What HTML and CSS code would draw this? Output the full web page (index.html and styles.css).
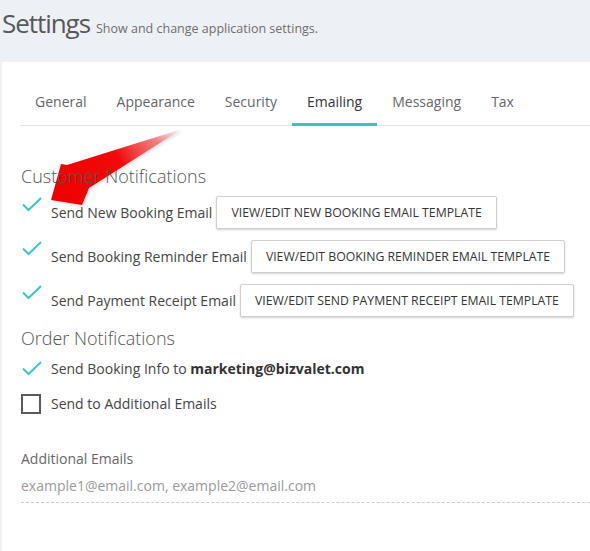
FILE: index.html
```html
<!DOCTYPE html>
<html>
<head>
<meta charset="utf-8">
<link rel="stylesheet" href="styles.css">
</head>
<body>
<header class="page-header">
  <h1 class="title">Settings</h1>
  <span class="subtitle">Show and change application settings.</span>
</header>
<main class="panel">
  <nav class="tabs">
    <a class="tab">General</a>
    <a class="tab">Appearance</a>
    <a class="tab">Security</a>
    <a class="tab active">Emailing</a>
    <a class="tab">Messaging</a>
    <a class="tab">Tax</a>
  </nav>

  <section class="content">
    <h2 class="section-title">Customer Notifications</h2>
    <div class="row row-btn">
      <span class="check"><svg viewBox="0 0 20 15" width="20" height="15"><polyline points="1,7.5 6.5,13 19,1" /></svg></span>
      <span class="label">Send New Booking Email</span>
      <button class="btn">VIEW/EDIT NEW BOOKING EMAIL TEMPLATE</button>
    </div>
    <div class="row row-btn">
      <span class="check"><svg viewBox="0 0 20 15" width="20" height="15"><polyline points="1,7.5 6.5,13 19,1" /></svg></span>
      <span class="label">Send Booking Reminder Email</span>
      <button class="btn">VIEW/EDIT BOOKING REMINDER EMAIL TEMPLATE</button>
    </div>
    <div class="row row-btn row-last">
      <span class="check"><svg viewBox="0 0 20 15" width="20" height="15"><polyline points="1,7.5 6.5,13 19,1" /></svg></span>
      <span class="label">Send Payment Receipt Email</span>
      <button class="btn">VIEW/EDIT SEND PAYMENT RECEIPT EMAIL TEMPLATE</button>
    </div>

    <h2 class="section-title second">Order Notifications</h2>
    <div class="row row-plain">
      <span class="check"><svg viewBox="0 0 20 15" width="20" height="15"><polyline points="1,7.5 6.5,13 19,1" /></svg></span>
      <span class="label">Send Booking Info to <b>marketing@bizvalet.com</b></span>
    </div>
    <div class="row row-box">
      <span class="box"></span>
      <span class="label">Send to Additional Emails</span>
    </div>

    <div class="field">
      <label class="field-label">Additional Emails</label>
      <div class="field-input">example1@email.com, example2@email.com</div>
    </div>
  </section>

  <svg class="arrow" viewBox="0 0 190 110" width="190" height="110">
    <defs>
      <linearGradient id="ag" gradientUnits="userSpaceOnUse" x1="60" y1="95" x2="182" y2="28">
        <stop offset="0" stop-color="#f00000"/>
        <stop offset="0.5" stop-color="#f20a0a"/>
        <stop offset="0.8" stop-color="#f25555" stop-opacity="0.7"/>
        <stop offset="1" stop-color="#f7a0a0" stop-opacity="0.1"/>
      </linearGradient>
      <filter id="as" x="-20%" y="-20%" width="140%" height="140%">
        <feGaussianBlur stdDeviation="1.5"/>
      </filter>
    </defs>
    <polygon points="51,99 61,63 67,64 182,28 89,87 82,104" fill="#000" opacity="0.12" filter="url(#as)" transform="translate(1,2)"/>
    <polygon points="51,99 61,63 67,64 182,28 89,87 82,104" fill="url(#ag)"/>
  </svg>
</main>
</body>
</html>
```

FILE: styles.css
```css
* { box-sizing: border-box; }
html, body { margin: 0; padding: 0; }
body {
  background: #edf0f5;
  font-family: "Open Sans", "Liberation Sans", sans-serif;
  color: #444;
  width: 590px;
  height: 551px;
  overflow: hidden;
}
.page-header {
  height: 62px;
  display: flex;
  align-items: baseline;
  padding: 3px 0 0 2px;
}
.title {
  margin: 0;
  font-size: 26px;
  font-weight: 400;
  letter-spacing: -1.05px;
  color: #585858;
  line-height: 40px;
}
.subtitle {
  margin-left: 6px;
  font-size: 12.5px;
  color: #6e6e6e;
}
.panel {
  position: relative;
  margin-left: 2px;
  width: 588px;
  height: 489px;
  background: #fff;
  padding-left: 18px;
  overflow: hidden;
}
.tabs {
  display: flex;
  padding-top: 20px;
  border-bottom: 1px solid #dfe4ea;
  margin-right: -40px;
}
.tab {
  display: block;
  padding: 10px 15px 11px;
  font-size: 14px;
  line-height: 20px;
  color: #666;
  border-bottom: 3px solid transparent;
  margin-bottom: -1px;
}
.tab.active {
  color: #333;
  border-bottom-color: #33c2cf;
}
.content {
  position: relative;
  z-index: 1;
  padding-left: 1px;
  padding-top: 38px;
}
.section-title {
  margin: 0 0 8px;
  font-size: 18px;
  font-weight: 300;
  line-height: 24px;
  color: #555;
}
.section-title.second { margin-bottom: 9px; }
.row {
  display: flex;
  align-items: center;
}
.row-btn {
  height: 33px;
  margin-bottom: 11px;
}
.row-btn.row-last { margin-bottom: 9px; }
.row-plain {
  height: 20px;
  margin-bottom: 15px;
}
.check {
  width: 30px;
  align-self: flex-start;
  padding-left: 1px;
  margin-top: 1px;
  display: flex;
}
.row-plain .check { margin-top: 2px; }
.check polyline {
  fill: none;
  stroke: #3cc3cf;
  stroke-width: 2;
}
.box {
  width: 20px;
  height: 20px;
  border: 2px solid #5a5a5a;
  margin-right: 10px;
}
.row-box { height: 20px; }
.label {
  font-size: 14px;
  line-height: 20px;
  color: #444;
}
.label b { color: #333; font-weight: 700; }
.btn {
  margin-left: 4px;
  height: 33px;
  padding: 0 14px;
  background: #fff;
  border: 1px solid #cfcfcf;
  border-radius: 2px;
  box-shadow: 0 1px 2px rgba(0,0,0,0.18);
  font-family: "Open Sans", "Liberation Sans", sans-serif;
  font-size: 12.25px;
  color: #333;
  white-space: nowrap;
}
.field {
  margin-top: 35px;
  margin-right: -40px;
}
.field-label {
  display: block;
  font-size: 14px;
  line-height: 20px;
  color: #666;
}
.field-input {
  margin-top: 7px;
  font-size: 14px;
  line-height: 20px;
  color: #9a9a9a;
  padding-bottom: 6px;
  border-bottom: 1px dashed #c9cfd8;
}
.arrow {
  position: absolute;
  z-index: 0;
  left: -2px;
  top: 39px;
  pointer-events: none;
}
```
